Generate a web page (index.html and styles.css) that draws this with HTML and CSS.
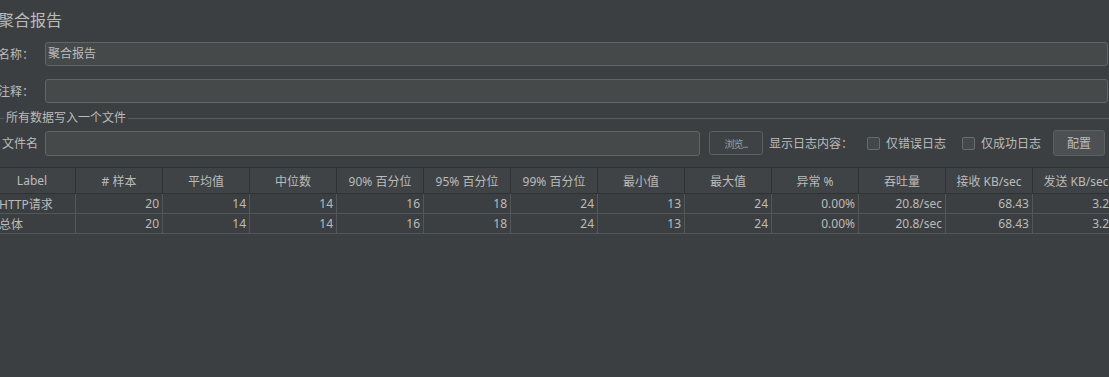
FILE: index.html
```html
<!DOCTYPE html>
<html lang="zh">
<head>
  <meta charset="UTF-8">
  <title>聚合报告</title>
  <link rel="stylesheet" href="styles.css">
</head>
<body>
  <div class="page">
    <h1 class="title">聚合报告</h1>

    <div class="field">
      <label class="field-label">名称：</label>
      <div class="input">聚合报告</div>
    </div>
    <div class="field">
      <label class="field-label">注释：</label>
      <div class="input"></div>
    </div>

    <div class="group-title"><span>所有数据写入一个文件</span></div>

    <div class="file-row">
      <label class="file-label">文件名</label>
      <div class="input file-input"></div>
      <button class="btn browse">浏览...</button>
      <span class="log-label">显示日志内容：</span>
      <span class="check"><i class="box"></i>仅错误日志</span>
      <span class="check"><i class="box"></i>仅成功日志</span>
      <button class="btn config">配置</button>
    </div>

    <table class="report">
      <thead>
        <tr>
          <th>Label</th>
          <th># 样本</th>
          <th>平均值</th>
          <th>中位数</th>
          <th>90% 百分位</th>
          <th>95% 百分位</th>
          <th>99% 百分位</th>
          <th>最小值</th>
          <th>最大值</th>
          <th>异常 %</th>
          <th>吞吐量</th>
          <th>接收 KB/sec</th>
          <th>发送 KB/sec</th>
        </tr>
      </thead>
      <tbody>
        <tr>
          <td class="name">HTTP请求</td>
          <td>20</td><td>14</td><td>14</td><td>16</td><td>18</td><td>24</td>
          <td>13</td><td>24</td><td>0.00%</td><td>20.8/sec</td><td>68.43</td><td>3.22</td>
        </tr>
        <tr>
          <td class="name">总体</td>
          <td>20</td><td>14</td><td>14</td><td>16</td><td>18</td><td>24</td>
          <td>13</td><td>24</td><td>0.00%</td><td>20.8/sec</td><td>68.43</td><td>3.22</td>
        </tr>
      </tbody>
    </table>
  </div>
</body>
</html>
```

FILE: styles.css
```css
body {
  margin: 0;
  background-color: #3c3f41;
  color: #bbbbbb;
  font-family: "Noto Sans", "Noto Sans CJK SC", sans-serif;
  font-size: 12px;
}

.page {
  width: 1109px;
  height: 377px;
  overflow: hidden;
}

.title {
  margin: 0 0 12px -2px;
  padding-top: 10px;
  font-size: 16px;
  font-weight: normal;
  line-height: 20px;
  color: #bbbbbb;
}

.field {
  display: flex;
  align-items: center;
  height: 24px;
  margin-bottom: 13px;
}

.field-label {
  width: 45px;
  margin-left: -2px;
  padding-right: 2px;
  white-space: nowrap;
  flex-shrink: 0;
}

.input {
  flex: 1;
  height: 24px;
  box-sizing: border-box;
  margin-right: 1px;
  padding: 0 2px;
  line-height: 22px;
  background-color: #45494a;
  border: 1px solid #646464;
  border-radius: 3px;
  color: #bbbbbb;
}

.group-title {
  display: flex;
  align-items: center;
  height: 16px;
  margin-top: -6px;
  line-height: 16px;
  white-space: nowrap;
}

.group-title::before {
  content: "";
  width: 4px;
  border-top: 1px solid #5a5d5f;
  margin-right: 2px;
}

.group-title::after {
  content: "";
  flex: 1;
  border-top: 1px solid #5a5d5f;
  margin-left: 2px;
}

.file-row {
  display: flex;
  align-items: center;
  height: 26px;
  margin-top: 4px;
  margin-bottom: 11px;
  white-space: nowrap;
}

.file-label {
  width: 43px;
  padding-left: 2px;
  flex-shrink: 0;
}

.file-input {
  flex: none;
  width: 655px;
  height: 25px;
  margin-right: 9px;
}

.btn {
  flex-shrink: 0;
  box-sizing: border-box;
  font-family: inherit;
  color: #bbbbbb;
  border: 1px solid #5e6060;
  border-radius: 3px;
  padding: 0;
}

.browse {
  width: 54px;
  height: 24px;
  background-color: #3e4244;
  font-size: 10px;
  color: #8fa0ab;
  letter-spacing: -1px;
}

.log-label {
  flex-shrink: 0;
  margin-left: 6px;
  margin-right: 14px;
}

.check {
  flex-shrink: 0;
  display: inline-flex;
  align-items: center;
  margin-right: 16px;
}

.box {
  width: 13px;
  height: 13px;
  box-sizing: border-box;
  margin-right: 6px;
  background-color: #43494a;
  border: 1px solid #6b6b6b;
  border-radius: 2px;
}

.config {
  width: 52px;
  height: 26px;
  margin-left: -4px;
  background-color: #4c5052;
  font-size: 12px;
}

.report {
  border-collapse: collapse;
  table-layout: fixed;
  width: 1131px;
  margin-left: -12px;
  font-size: 12px;
}

.report th,
.report td {
  width: 87px;
  box-sizing: border-box;
  overflow: hidden;
  white-space: nowrap;
  font-weight: normal;
}

.report th {
  height: 26px;
  padding: 0;
  text-align: center;
  background-color: #404345;
  border: 1px solid #2f3234;
}

.report td {
  height: 20px;
  padding: 0 3px;
  text-align: right;
  border: 1px solid #515658;
  border-top: none;
}

.report td.name {
  text-align: left;
  padding-left: 10px;
}
```
